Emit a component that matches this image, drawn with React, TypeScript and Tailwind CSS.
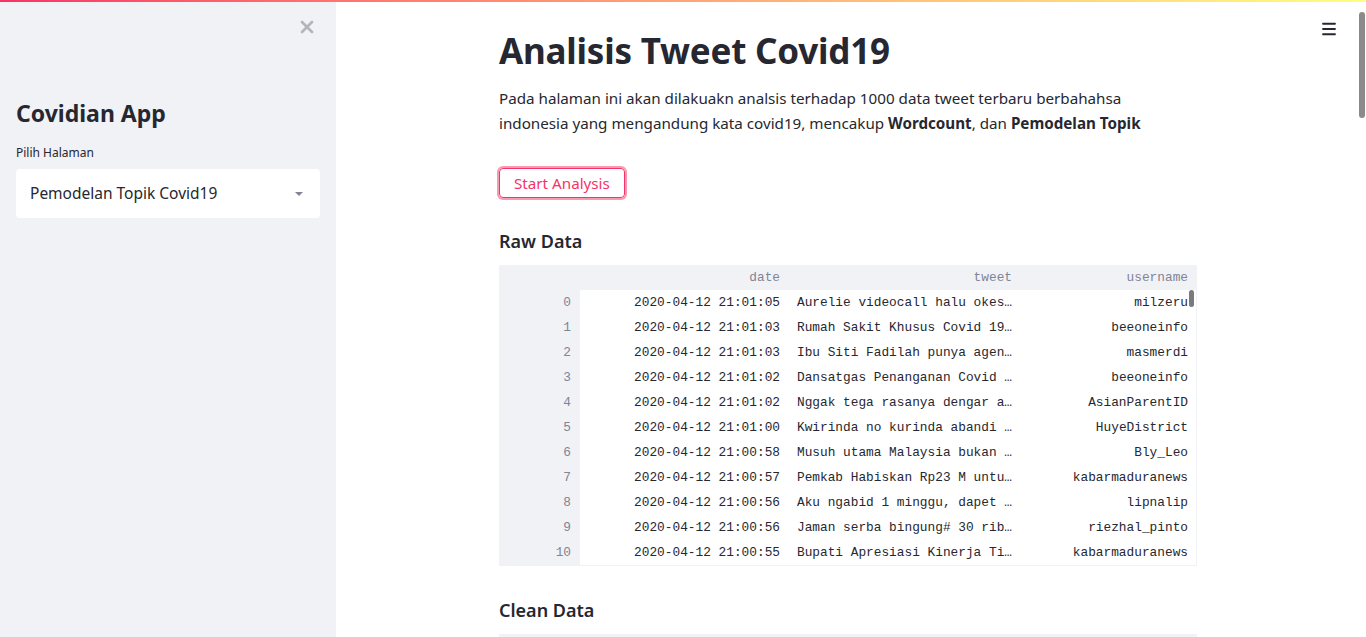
import { X, Menu } from 'lucide-react'

const rows = [
  ['2020-04-12 21:01:05', 'Aurelie videocall halu okes…', 'milzeru'],
  ['2020-04-12 21:01:03', 'Rumah Sakit Khusus Covid 19…', 'beeoneinfo'],
  ['2020-04-12 21:01:03', 'Ibu Siti Fadilah punya agen…', 'masmerdi'],
  ['2020-04-12 21:01:02', 'Dansatgas Penanganan Covid …', 'beeoneinfo'],
  ['2020-04-12 21:01:02', 'Nggak tega rasanya dengar a…', 'AsianParentID'],
  ['2020-04-12 21:01:00', 'Kwirinda no kurinda abandi …', 'HuyeDistrict'],
  ['2020-04-12 21:00:58', 'Musuh utama Malaysia bukan …', 'Bly_Leo'],
  ['2020-04-12 21:00:57', 'Pemkab Habiskan Rp23 M untu…', 'kabarmaduranews'],
  ['2020-04-12 21:00:56', 'Aku ngabid 1 minggu, dapet …', 'lipnalip'],
  ['2020-04-12 21:00:56', 'Jaman serba bingung# 30 rib…', 'riezhal_pinto'],
  ['2020-04-12 21:00:55', 'Bupati Apresiasi Kinerja Ti…', 'kabarmaduranews'],
]

const sans = { fontFamily: '"Noto Sans", Roboto, sans-serif' }
const mono = { fontFamily: '"Liberation Mono", "DejaVu Sans Mono", monospace' }

export default function App() {
  return (
    <div className="relative h-[637px] w-[1366px] overflow-hidden bg-white text-[#262730]" style={sans}>
      {/* top decoration */}
      <div className="absolute left-0 top-0 z-10 h-[2px] w-full bg-gradient-to-r from-[#f63366] to-[#fffd80]" />

      <div className="flex h-full">
        {/* Sidebar */}
        <aside className="w-[336px] shrink-0 bg-[#f0f2f6] px-4">
          <div className="flex justify-end pt-[17px] pr-[3px]">
            <X size={20} strokeWidth={3.2} className="text-[#b4b5bb]" />
          </div>
          <h2 className="mt-[58px] text-[23px] font-bold leading-[36px]">Covidian App</h2>
          <p className="mt-[14px] text-[12px] leading-[16px] text-[#262730]">Pilih Halaman</p>
          <div className="mt-[8px] flex h-[49px] items-center justify-between rounded-[4px] bg-white pl-[14px] pr-[17px]">
            <span className="text-[15.5px]">Pemodelan Topik Covid19</span>
            <svg width="8" height="4" viewBox="0 0 8 4">
              <path d="M0 0 L8 0 L4 4 Z" fill="#808495" />
            </svg>
          </div>
        </aside>

        {/* Main */}
        <main className="relative flex-1">
          <div className="absolute right-[28px] top-[20px]">
            <Menu size={18} strokeWidth={2.4} className="text-[#262730]" />
          </div>
          <div className="absolute right-[1px] top-[12px] h-[106px] w-[6px] rounded-full bg-[#8a8a8a]" />

          <div className="ml-[163px] w-[698px] pt-[28px]">
            <h1 className="text-[35px] font-bold leading-[46px] tracking-[-0.2px]">Analisis Tweet Covid19</h1>
            <p className="mt-[12px] text-[15.2px] leading-[25px]">
              Pada halaman ini akan dilakuakn analsis terhadap 1000 data tweet terbaru berbahahsa
              <br />
              indonesia yang mengandung kata covid19, mencakup <b>Wordcount</b>, dan <b>Pemodelan Topik</b>
            </p>
            <button className="mt-[32px] h-[30px] rounded-[4px] border border-[#f63366] px-[14px] text-[15.2px] text-[#f63366] shadow-[0_0_0_2px_rgba(246,51,102,0.5)]">
              Start Analysis
            </button>

            <h3 className="mt-[30px] text-[18px] font-semibold leading-[26px]">Raw Data</h3>
            <div className="mt-[11px] border-r border-b border-[#f0f2f6] text-[12.8px]" style={mono}>
              <div className="flex h-[25px] items-center bg-[#f0f2f6] text-[#808495]">
                <div className="w-[81px]" />
                <div className="w-[208px] pr-[8px] text-right">date</div>
                <div className="w-[232px] pr-[8px] text-right">tweet</div>
                <div className="w-[176px] pr-[8px] text-right">username</div>
              </div>
              <div className="relative">
                {rows.map((r, i) => (
                  <div key={i} className="flex h-[25px] items-center">
                    <div className="flex h-full w-[81px] items-center justify-end bg-[#f0f2f6] pr-[9px] text-[#808495]">{i}</div>
                    <div className="w-[208px] pr-[8px] text-right text-[#262730]">{r[0]}</div>
                    <div className="w-[232px] pr-[8px] text-right text-[#262730]">{r[1]}</div>
                    <div className="w-[176px] pr-[8px] text-right text-[#262730]">{r[2]}</div>
                  </div>
                ))}
                <div className="absolute right-[2px] top-[0px] h-[17px] w-[5px] rounded-full bg-[#7a7a7a]" />
              </div>
            </div>

            <h3 className="mt-[31px] text-[18px] font-semibold leading-[26px]">Clean Data</h3>
            <div className="mt-[11px] h-[25px] bg-[#f0f2f6]" />
          </div>
        </main>
      </div>
    </div>
  )
}
